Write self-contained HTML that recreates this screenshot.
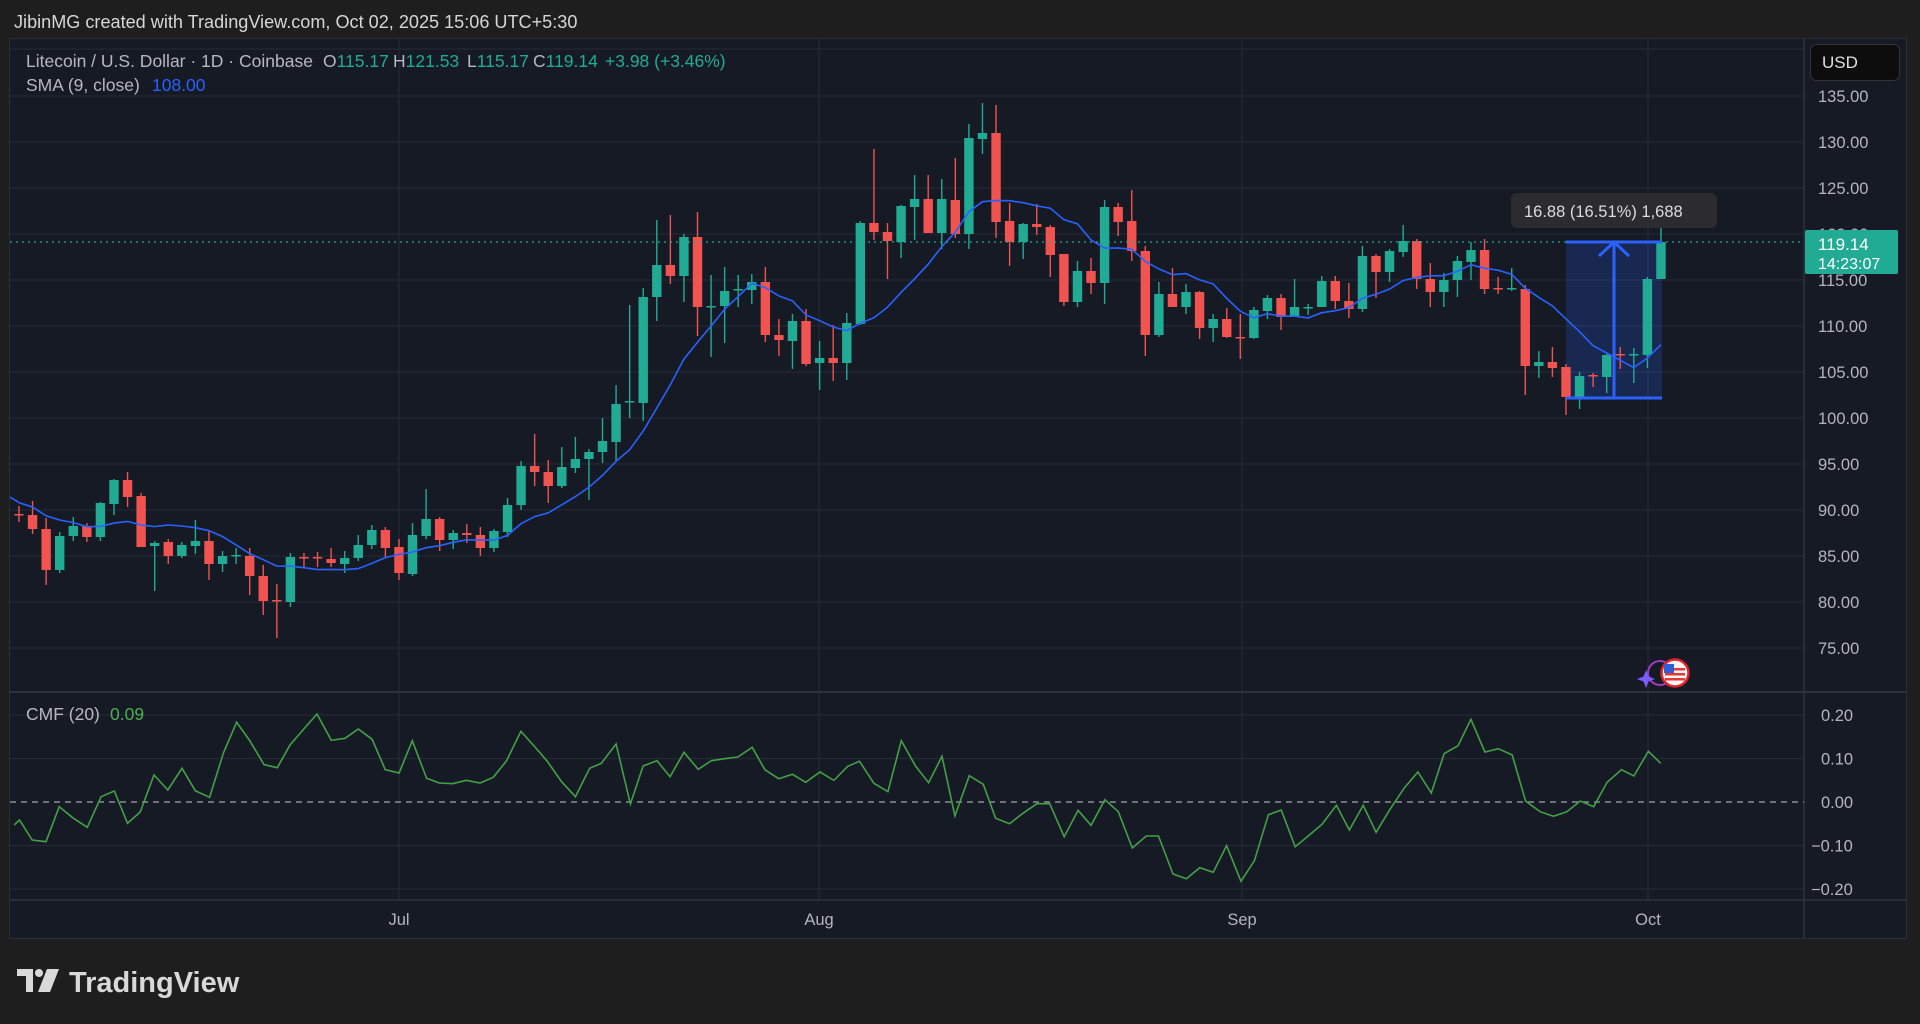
<!DOCTYPE html>
<html><head><meta charset="utf-8"><style>
html,body{margin:0;padding:0;background:#1e1e1e;width:1920px;height:1024px;overflow:hidden;font-family:"Liberation Sans",Arial,sans-serif}
svg{position:absolute;left:0;top:0}
</style></head><body>
<svg id="s" width="1920" height="1024" viewBox="0 0 1920 1024" xmlns="http://www.w3.org/2000/svg" font-family="Liberation Sans, Arial, sans-serif">
<rect x="0" y="0" width="1920" height="1024" fill="#1e1e1e"/>
<text x="14" y="28" font-size="18.1" fill="#d6d6d6">JibinMG created with TradingView.com, Oct 02, 2025 15:06 UTC+5:30</text>
<rect x="9.5" y="38.5" width="1897" height="900" fill="#161a25" stroke="#2a2e39"/>
<g id="grid" stroke="#242834" stroke-width="1.3"></g>
<line x1="10" y1="692" x2="1906" y2="692" stroke="#2e323d" stroke-width="2"/>
<line x1="10" y1="900" x2="1906" y2="900" stroke="#2e323d" stroke-width="1.5"/>
<line x1="1804" y1="38" x2="1804" y2="938" stroke="#2e323d" stroke-width="1.5"/>
<rect x="1566" y="242" width="96" height="156" fill="rgba(41,98,255,0.2)"/>
<g id="candles"></g>
<polyline id="sma" fill="none" stroke="#2962ff" stroke-width="1.6"/>
<line x1="10" y1="242" x2="1804" y2="242" stroke="#22ab94" stroke-width="1.3" stroke-dasharray="2 4"/>
<g stroke="#2962ff" stroke-width="3" fill="none">
<line x1="1566" y1="242" x2="1662" y2="242"/><line x1="1566" y1="398" x2="1662" y2="398"/>
<line x1="1614" y1="398" x2="1614" y2="243"/><polyline points="1599,256 1614,242 1629,256"/>
</g>
<rect x="1511" y="193" width="206" height="35" rx="6" fill="#2c2c2e"/>
<text x="1524" y="217" font-size="16.5" fill="#dcdcdc">16.88 (16.51%) 1,688</text>
<g font-size="17.5" fill="#b5b8c0">
<text x="26" y="67">Litecoin / U.S. Dollar · 1D · Coinbase</text>
<text x="323" y="67">O<tspan fill="#22ab94">115.17</tspan></text>
<text x="393" y="67">H<tspan fill="#22ab94">121.53</tspan></text>
<text x="467" y="67">L<tspan fill="#22ab94">115.17</tspan></text>
<text x="533" y="67">C<tspan fill="#22ab94">119.14</tspan></text>
<text x="605" y="67" fill="#22ab94">+3.98 (+3.46%)</text>
<text x="26" y="91">SMA (9, close)</text>
<text x="152" y="91" fill="#2962ff">108.00</text>
<text x="26" y="720">CMF (20)</text>
<text x="110" y="720" fill="#4caf50">0.09</text>
</g>
<line x1="10" y1="802" x2="1804" y2="802" stroke="#8a8d95" stroke-width="1.5" stroke-dasharray="6 5"/>
<polyline id="cmf" fill="none" stroke="#43a047" stroke-width="1.6"/>
<g id="axis" font-size="16.5" fill="#b2b5be"></g>
<rect x="1810.5" y="44.5" width="89" height="36" rx="6" fill="#0d0d0d" stroke="#333"/>
<text x="1822" y="68" font-size="17" fill="#e0e0e0">USD</text>
<rect x="1805" y="230" width="93" height="44" rx="2" fill="#22ab94"/>
<text x="1818" y="250" font-size="17" fill="#ffffff">119.14</text>
<text x="1818" y="269" font-size="16" fill="#ffffff">14:23:07</text>
<g font-size="16.5" fill="#b2b5be" text-anchor="middle">
<text x="399" y="925">Jul</text><text x="819" y="925">Aug</text><text x="1242" y="925">Sep</text><text x="1648" y="925">Oct</text>
</g>
<circle cx="1660" cy="673" r="12" fill="none" stroke="#9c3cc0" stroke-width="2"/>
<path d="M1646 670 L1648.5 676.5 L1655 679 L1648.5 681.5 L1646 688 L1643.5 681.5 L1637 679 L1643.5 676.5Z" fill="#7b5cff"/>
<circle cx="1675" cy="673" r="13.5" fill="#f5f5f5" stroke="#e0232e" stroke-width="2.5"/>
<g fill="#e53935"><rect x="1665" y="668" width="20" height="2.5"/><rect x="1665" y="673" width="20" height="2.5"/><rect x="1665" y="678" width="20" height="2.5"/></g>
<rect x="1664" y="664" width="10" height="9" fill="#2f5fd6"/>
<g transform="translate(17,969)" fill="#d9d9d9">
<path d="M0 0 H16 V23 H9 V7 H0Z"/><circle cx="22" cy="4" r="4"/><path d="M30 0 H42 L33 23 H21Z"/>
</g>
<text x="69" y="992" font-size="29" font-weight="bold" fill="#d9d9d9">TradingView</text>
</svg>
<script>
var NS="http://www.w3.org/2000/svg";
function el(p,n,a,t){var e=document.createElementNS(NS,n);for(var k in a)e.setAttribute(k,a[k]);if(t)e.textContent=t;p.appendChild(e);return e;}
var grid=document.getElementById('grid'),axis=document.getElementById('axis');
el(grid,'line',{x1:10,y1:49,x2:1804,y2:49});
for(var k=0;k<=12;k++){var y=96+k*46;el(grid,'line',{x1:10,y1:y,x2:1804,y2:y});el(axis,'text',{x:1818,y:y+6},(135-5*k).toFixed(2));}
var cy=[715,758.5,802,845.5,889],cl=['0.20','0.10','0.00','−0.10','−0.20'];
for(var i=0;i<5;i++){if(i!=2)el(grid,'line',{x1:10,y1:cy[i],x2:1804,y2:cy[i]});el(axis,'text',{x:(i>2?1811:1821),y:cy[i]+6},cl[i]);}
[399,819,1242,1648].forEach(function(x){el(grid,'line',{x1:x,y1:38,x2:x,y2:900});});
var D="514,515,506,522,r|515,529,501,534,r|529,570,518,585,r|536,570,532,573,g|526,536,517,541,g|526,537,523,542,r|503,537,502,541,g|480,504,479,515,g|480,497,472,507,r|496,547,493,547,r|543,546,541,591,g|542,556,539,564,r|545,556,542,558,g|541,546,520,554,g|541,564,531,580,r|556,564,551,572,g|555,556,548,564,g|556,576,548,595,r|576,601,565,615,r|600,601,584,638,r|557,602,553,607,g|557,558,553,567,r|557,558,552,567,r|559,563,548,567,r|558,564,551,573,g|545,558,535,561,g|530,545,525,549,g|530,548,527,558,r|547,573,539,580,r|535,574,523,576,g|519,536,489,539,g|519,540,517,551,r|533,540,530,549,g|533,535,524,543,r|535,548,527,556,r|531,548,529,552,g|505,532,498,537,g|466,505,461,510,g|466,472,434,486,r|472,486,460,503,r|467,486,447,488,g|459,468,437,473,g|452,459,449,500,g|441,452,418,463,g|404,442,385,461,g|401,402,305,418,g|297,403,288,421,g|265,297,220,321,g|265,276,215,284,r|237,276,234,302,g|237,307,212,336,r|306,307,275,357,g|291,306,267,343,g|289,290,275,307,g|282,290,274,304,g|282,335,267,342,r|335,340,319,356,r|321,341,314,369,g|321,364,309,366,r|358,363,341,390,g|358,363,325,381,r|323,363,313,380,g|223,324,221,325,g|223,232,149,240,r|232,241,223,279,r|206,242,205,258,g|199,207,175,240,g|199,233,175,233,r|199,233,179,249,g|200,234,158,238,r|138,234,124,249,g|133,139,103,154,g|133,222,105,238,r|221,242,203,266,r|224,242,223,259,g|224,227,204,235,r|227,255,225,277,r|254,302,254,306,r|271,302,261,307,g|271,283,258,294,r|207,283,200,304,g|207,222,203,236,r|221,251,190,261,r|251,335,246,356,r|294,335,282,337,g|294,307,268,307,r|292,307,284,314,g|292,328,291,339,r|319,328,314,342,g|319,337,308,338,r|337,338,314,359,r|310,338,307,339,g|298,311,295,319,g|298,317,294,330,r|307,317,279,317,g|307,308,304,315,g|281,307,276,307,g|281,301,276,309,r|301,309,283,318,r|256,309,246,312,g|256,272,254,298,r|251,272,249,282,g|241,252,225,257,g|241,279,239,289,r|279,292,263,307,r|280,292,273,307,g|261,280,256,297,g|250,262,242,280,g|250,289,239,294,r|288,289,277,294,r|288,289,268,291,g|289,366,285,395,r|362,366,351,378,g|362,368,347,377,r|367,397,364,415,r|376,397,372,409,g|375,376,373,387,r|355,377,354,393,g|354,355,347,369,r|354,355,348,383,g|279,355,277,368,g|242,279,220,279,g";
var cg=document.getElementById('candles'),closes=[],xs=[];
D.split('|').forEach(function(s,i){var a=s.split(','),bt=+a[0],bb=+a[1],wt=+a[2],wb=+a[3],c=a[4]=='g'?'#22ab94':'#f05350';
var x=19+i*13.57;xs.push(x);closes.push(a[4]=='g'?bt:bb);
el(cg,'line',{x1:x,y1:wt,x2:x,y2:wb,stroke:c,'stroke-width':1.4});
el(cg,'rect',{x:x-4.7,y:bt,width:9.4,height:Math.max(1.5,bb-bt),fill:c});});
var pre=[488,492,498,503,500,505,510,512],all=pre.concat(closes),pts=[];
for(var i=0;i<closes.length;i++){var s=0;for(var j=0;j<9;j++)s+=all[i+8-j];pts.push(xs[i].toFixed(1)+','+(s/9).toFixed(1));}
pts.unshift('10,497');
document.getElementById('sma').setAttribute('points',pts.join(' '));
var A=[[8,405],[18,390],[42,450],[68,455],[93,350],[120,385],[146,412],[172,320],[197,303],[222,400],[246,366],[272,255],[298,300],[325,235],[350,302],[377,322],[403,190],[428,97],[452,150],[480,224],[505,233],[529,165],[555,117],[580,72],[607,151],[633,145],[658,117],[684,148],[709,239],[735,249],[760,152],[787,265],[811,279],[836,281],[862,271],[888,279],[913,262],[938,212],[965,124],[990,168],[1015,214],[1042,275],[1068,320],[1095,235],[1117,220],[1145,162],[1172,342],[1196,228],[1222,212],[1247,260],[1273,187],[1300,238],[1325,212],[1350,206],[1375,201],[1402,172],[1426,239],[1452,266],[1478,253],[1503,277],[1530,246],[1555,270]];
var B=[[8,270],[33,229],[55,214],[82,280],[108,305],[133,152],[160,229],[184,278],[209,199],[233,378],[260,257],[286,283],[309,385],[335,401],[360,370],[386,341],[410,341],[437,440],[463,361],[487,406],[513,329],[538,365],[564,474],[590,438],[613,438],[640,552],[665,566],[690,533],[715,547],[740,467],[767,574],[792,512],[818,374],[842,360],[868,470],[894,436],[918,403],[945,346],[969,420],[995,346],[1019,427],[1045,358],[1072,293],[1097,246],[1122,309],[1146,191],[1172,167],[1196,88],[1222,186],[1247,176],[1273,195],[1298,333],[1325,365],[1350,379],[1375,365],[1400,333],[1425,350],[1450,277],[1477,239],[1500,258],[1527,184],[1550,220]];
var cp=[];A.forEach(function(p){cp.push((p[0]/1.889+10).toFixed(1)+','+(p[1]/3+690).toFixed(1));});
B.forEach(function(p){cp.push((p[0]/1.866+830).toFixed(1)+','+(p[1]/3+690).toFixed(1));});
document.getElementById('cmf').setAttribute('points',cp.join(' '));
</script>
</body></html>
